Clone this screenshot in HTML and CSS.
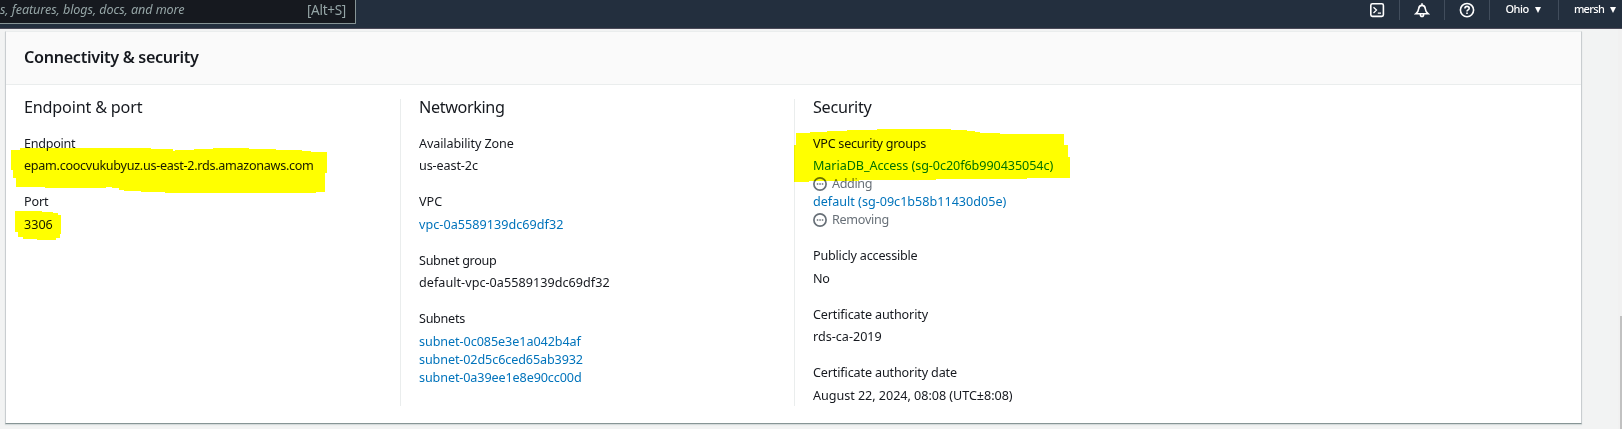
FILE: index.html
```
<!DOCTYPE html>
<html lang="en">
<head>
<meta charset="utf-8">
<title>Connectivity &amp; security</title>
<link rel="stylesheet" href="styles.css">
</head>
<body>
<header class="topbar">
  <div class="search"><span class="placeholder">s, features, blogs, docs, and more</span><span class="shortcut">[Alt+S]</span></div>
  <nav class="tools">
    <div class="tool"><svg width="16" height="16" viewBox="0 0 16 16"><rect x="1.8" y="1.8" width="12.6" height="12.6" rx="1.6"/><path class="thin" d="M4.5 5.2l3 2.9-3 2.9M8.8 11.2h3.2"/></svg></div>
    <div class="tool"><svg width="16" height="16" viewBox="0 0 16 16"><path d="M2 11.7c1.8-1.5 2.5-3 2.7-5C4.9 4.500 6.200 3.400 8 3.400s3.100 1.100 3.300 3.300c.2 2 .9 3.500 2.700 5zM8 3.400V1.300M6.300 12c0 3.400 3.400 3.400 3.400 0"/></svg></div>
    <div class="tool"><svg width="16" height="16" viewBox="0 0 16 16"><circle cx="8" cy="8.100" r="6.600"/><path d="M5.900 6.500c0-2.900 4.300-2.700 4.300-.2 0 1.600-2.200 1.600-2.200 3.200M8 10.600v1.500"/></svg></div>
    <div class="tool region"><span>Ohio</span><i class="caret"></i></div>
    <div class="tool user"><span>mersh</span><i class="caret"></i></div>
  </nav>
</header>
<main class="page">
  <section class="panel">
    <h2 class="panel-title"><span>Connectivity &amp; security</span></h2>
    <div class="columns">
      <div class="column">
        <h3 class="snug">Endpoint &amp; port</h3>
        <dl>
          <dt class="tighter">Endpoint</dt>
          <dd class="tighter">epam.coocvukubyuz.us-east-2.rds.amazonaws.com</dd>
          <dt class="tight">Port</dt>
          <dd>3306</dd>
        </dl>
      </div>
      <div class="column">
        <h3 class="narrow">Networking</h3>
        <dl>
          <dt class="tight">Availability Zone</dt>
          <dd class="tight">us-east-2c</dd>
          <dt>VPC</dt>
          <dd class="wide"><a>vpc-0a5589139dc69df32</a></dd>
          <dt class="tighter">Subnet group</dt>
          <dd class="wide">default-vpc-0a5589139dc69df32</dd>
          <dt class="tighter">Subnets</dt>
          <dd class="tight"><a class="near">subnet-0c085e3e1a042b4af</a><a>subnet-02d5c6ced65ab3932</a><a>subnet-0a39ee1e8e90cc00d</a></dd>
        </dl>
      </div>
      <div class="column">
        <h3 class="tighter">Security</h3>
        <dl>
          <dt class="snugger">VPC security groups</dt>
          <dd>
            <a class="near">MariaDB_Access (sg-0c20f6b990435054c)</a>
            <div class="status narrow"><svg width="14" height="14" viewBox="0 0 14 14"><circle cx="7" cy="7" r="6.100"/><path d="M3.800 7h1.500M6.300 7h1.500M8.800 7h1.500"/></svg>Adding</div>
            <a>default (sg-09c1b58b11430d05e)</a>
            <div class="status tighter"><svg width="14" height="14" viewBox="0 0 14 14"><circle cx="7" cy="7" r="6.100"/><path d="M3.800 7h1.500M6.300 7h1.500M8.800 7h1.500"/></svg>Removing</div>
          </dd>
          <dt class="snug">Publicly accessible</dt>
          <dd class="narrow">No</dd>
          <dt class="certificate">Certificate authority</dt>
          <dd>rds-ca-2019</dd>
          <dt class="certificate">Certificate authority date</dt>
          <dd class="date">August 22, 2024, 08:08 (UTC±8:08)</dd>
        </dl>
      </div>
    </div>
  </section>
  <div class="scrollbar"><div class="thumb"></div></div>
</main>
<svg class="marker" width="1622" height="429" viewBox="0 0 1622 429">
  <path d="M11 150H20V148H151V149H173V151H175V150H194V149H213V148H249V149H276V150H302V151H311V152H327V173H325V192H316V193H165V192H141V191H124V190H119V188H112V187H106V188H45V187H16V178H13V170H11Z"/>
  <path d="M15 211H42V212H53V213H58V215H61V234H60V238H56V240H37V239H23V237H18V232H15Z"/>
  <path d="M796 133H810V132H827V131H847V130H877V129H951V130H967V131H975V132H980V133H1000V134H1064V145H1068V157H1070V178H1027V179H936V180H859V181H809V182H794V145H796Z"/>
</svg>
</body>
</html>
```
FILE: styles.css
```
* { box-sizing: border-box; }
body {
  margin: 0;
  height: 429px;
  overflow: hidden;
  display: flex;
  flex-direction: column;
  background: #f2f3f3;
  color: #16191f;
  font: 12.6px/18px "Noto Sans", sans-serif;
}
h2, h3, dl, dt, dd { margin: 0; }

.topbar {
  flex: none;
  height: 29px;
  display: flex;
  justify-content: space-between;
  align-items: flex-start;
  background: #232f3e;
  border-bottom: 1px solid #4b4a58;
}
.search {
  width: 356px;
  height: 24px;
  padding: 0 9px 4px 0;
  display: flex;
  justify-content: space-between;
  align-items: center;
  background: #16191f;
  border: solid #879596;
  border-width: 0 1px 1px 0;
  border-bottom-right-radius: 1px;
  color: #95a5a6;
}
.placeholder { font-style: italic; letter-spacing: -.07px; }
.shortcut { font-size: 13.5px; letter-spacing: -.28px; }
.tools { display: flex; height: 20px; color: #fff; }
.tool {
  width: 45px;
  display: flex;
  align-items: center;
  justify-content: center;
  border-left: 1px solid #414d5c;
  font-size: 11px;
  font-weight: 500;
}
.tool:first-child { border-left: 0; }
.tool svg { fill: none; stroke: #fff; stroke-width: 1.6; }
.tool svg .thin { stroke-width: 1.3; }
.region { width: 69px; padding-right: 2px; gap: 6px; letter-spacing: -.5px; }
.user { width: 64px; padding-left: 9px; gap: 6px; letter-spacing: -.68px; }
.tool span { margin-top: -2px; }
.caret {
  border: solid transparent;
  border-width: 6px 3.5px 0;
  border-top-color: #fff;
}

.page { flex: 1; display: flex; justify-content: space-between; align-items: flex-start; padding-left: 5px; }
.panel {
  width: 1577px;
  height: 393px;
  margin-top: 2px;
  background: #fff;
  border: 1px solid #c9cdd0;
  border-top-color: #eaeded;
  border-bottom-color: #879596;
  box-shadow: 0 1px 1px #d5dbdb;
}
.panel-title {
  height: 53px;
  padding: 0 18px 3px;
  display: flex;
  align-items: center;
  background: #fafafa;
  border-bottom: 1px solid #eaeded;
  font-size: 16.2px;
  font-weight: 600;
  letter-spacing: -.32px;
}
.columns { display: grid; grid-template-columns: 394px 394px 394px; padding-top: 14px; }
.column { height: 307px; padding-left: 18px; border-left: 1px solid #eaeded; }
.column:first-child { border-color: transparent; margin-left: -1px; }
.column h3 { height: 35.7px; line-height: 16px; font-size: 16.2px; font-weight: 400; }
dd { padding-top: 4.5px; }
dd + dt { margin-top: 18px; }
dd a { display: block; color: #0073bb; }
.status { display: flex; align-items: center; gap: 5px; color: #687078; }
.status svg { fill: none; stroke: #687078; stroke-width: 1.7; }

.wide { letter-spacing: .04px; }
.near { letter-spacing: -.07px; }
.tight { letter-spacing: -.11px; }
.certificate { letter-spacing: -.14px; }
.snug { letter-spacing: -.2px; }
.snugger { letter-spacing: -.26px; }
.tighter { letter-spacing: -.286px; }
.narrow { letter-spacing: -.38px; }
.date { letter-spacing: -.04px; }

.scrollbar { width: 4px; height: 400px; padding: 287px 0 0 2px; background: #f1f1f1; }
.thumb { height: 113px; background: #c1c1c1; }

/* Highlighter strokes laid over the text */
.marker { position: absolute; inset: 0; fill: #ff0; mix-blend-mode: multiply; pointer-events: none; }
```
